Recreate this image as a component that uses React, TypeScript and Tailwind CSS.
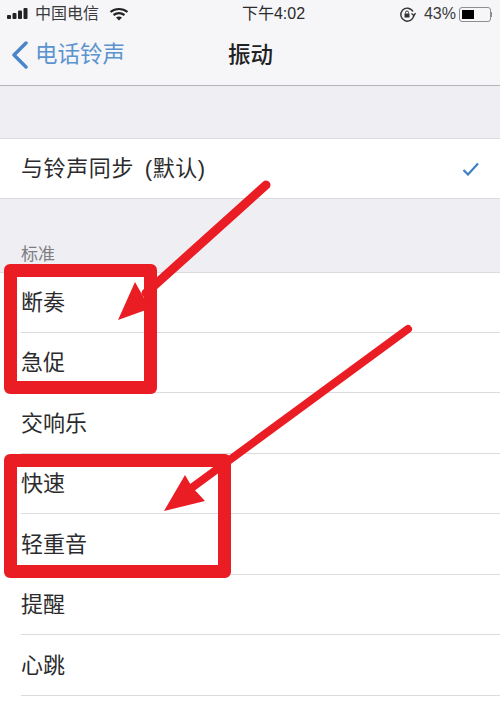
const FONT = "font-['Liberation_Sans','Noto_Sans_CJK_SC',sans-serif]";

const ROWS = [
  { label: "断奏", h: "h-[60px]" },
  { label: "急促", h: "h-[60px]" },
  { label: "交响乐", h: "h-[61px]" },
  { label: "快速", h: "h-[60px]" },
  { label: "轻重音", h: "h-[61px]" },
  { label: "提醒", h: "h-[60px]" },
  { label: "心跳", h: "h-[61px]" },
];

function StatusBar() {
  return (
    <div className="flex h-[28px] items-center justify-between pl-[7px] pr-[8px] text-[16px] text-[#2b2b2d]">
      <div className="flex w-[170px] items-center">
        <svg width="24" height="12" viewBox="0 0 24 12" fill="#222">
          <rect x="0" y="7" width="4" height="4" rx="1" />
          <rect x="5.5" y="5" width="4" height="6" rx="1" />
          <rect x="11" y="2.5" width="4" height="8.5" rx="1" />
          <rect x="16.5" y="0" width="4" height="11" rx="1" />
        </svg>
        <span className="ml-[4px] text-[#3a3a3c]">中国电信</span>
        <svg className="ml-[10px]" width="20" height="14" viewBox="0 0 20 14" fill="none" stroke="#222" strokeWidth="2.2">
          <path d="M1.5 5C6.5 1 13.5 1 18.500 5" />
          <path d="M4.500 8C8 5.500 12 5.500 15.500 8" />
          <path d="M10 13.500L7 10.500C8.800 9.300 11.200 9.300 13 10.500Z" fill="#222" stroke="none" />
        </svg>
      </div>
      <span className="ml-[48px]">下午4:02</span>
      <div className="flex w-[170px] items-center justify-end">
        <svg width="17" height="17" viewBox="0 0 17 17" fill="none" stroke="#333" strokeWidth="1.400">
          <path d="M14 5.500A6.500 6.500 0 1 0 14.800 9" />
          <path d="M12.500 7.500L15 9.500L16.500 7" />
          <rect x="5.500" y="7.500" width="5" height="4" fill="#333" stroke="none" />
          <path d="M6.500 7.500V6.500A1.500 1.500 0 0 1 9.500 6.500V7.500" strokeWidth="1" />
        </svg>
        <span className="ml-[8px] text-[#3a3a3c]">43%</span>
        <div className="ml-[3px] flex h-[15px] w-[32px] items-center rounded-[3px] border border-[#8e8e90] p-[2px]">
          <div className="h-full w-[12px] bg-black" />
        </div>
        <div className="h-[5px] w-[1px] bg-[#8e8e90]" />
      </div>
    </div>
  );
}

function NavBar() {
  return (
    <div className="relative flex h-[58px] items-center border-b border-[#b4b4b8] pb-[3px] pl-[11px]">
      <svg width="18" height="28" viewBox="0 0 18 28" fill="none" stroke="#4a86c8" strokeWidth="3.500" strokeLinecap="round" strokeLinejoin="round">
        <path d="M15 2L3 14L15 26" />
      </svg>
      <span className="ml-[6px] text-[22.5px] text-[#5b93cf]">电话铃声</span>
      <span className="absolute left-[228px] top-[11px] text-[22.5px] font-medium text-[#222]">振动</span>
    </div>
  );
}

function Annotations() {
  return (
    <>
      <div className="absolute left-[4px] top-[264px] h-[130px] w-[153px] rounded-[6px] border-[13px] border-[#ea1c24]" />
      <div className="absolute left-[4px] top-[454px] h-[124px] w-[227px] rounded-[6px] border-[13px] border-[#ea1c24]" />
      <svg className="absolute left-0 top-0" width="500" height="710" viewBox="0 0 500 710" fill="#ea1c24">
        <path d="M266 185L146 293" stroke="#ea1c24" strokeWidth="9" strokeLinecap="round" fill="none" />
        <path d="M118 320L135 282L144 298L157 306Z" />
        <path d="M408 329L186 492" stroke="#ea1c24" strokeWidth="8" strokeLinecap="round" fill="none" />
        <path d="M164 511L185 475L192 487L205 501Z" />
      </svg>
    </>
  );
}

export default function App() {
  return (
    <div className={`relative h-[710px] w-[500px] overflow-hidden bg-white ${FONT}`}>
      <div className="bg-[#f6f6f9]">
        <StatusBar />
        <NavBar />
      </div>

      <div className="h-[53px] border-b border-[#dcdce0] bg-[#eeeef3]" />

      <div className="flex h-[59px] items-center justify-between pl-[21px] pr-[20px]">
        <span className="text-[22px] tracking-[0.6px] text-[#2b2b2d] [word-spacing:4px]">与铃声同步 (默认)</span>
        <svg width="18" height="14" viewBox="0 0 18 14" fill="none" stroke="#3f7fc4" strokeWidth="2.200">
          <path d="M1.500 8L6 12.500L16 1.500" />
        </svg>
      </div>

      <div className="flex h-[75px] items-end border-y border-[#dcdce0] bg-[#eeeef3] pb-[6px] pl-[21px]">
        <span className="text-[17px] leading-[22px] text-[#7d7d82]">标准</span>
      </div>

      {ROWS.map((row) => (
        <div key={row.label} className={`${row.h} pl-[21px]`}>
          <div className="flex h-full items-center border-b border-[#dcdce0] text-[22px] text-[#2b2b2d]">
            {row.label}
          </div>
        </div>
      ))}

      <Annotations />
    </div>
  );
}
